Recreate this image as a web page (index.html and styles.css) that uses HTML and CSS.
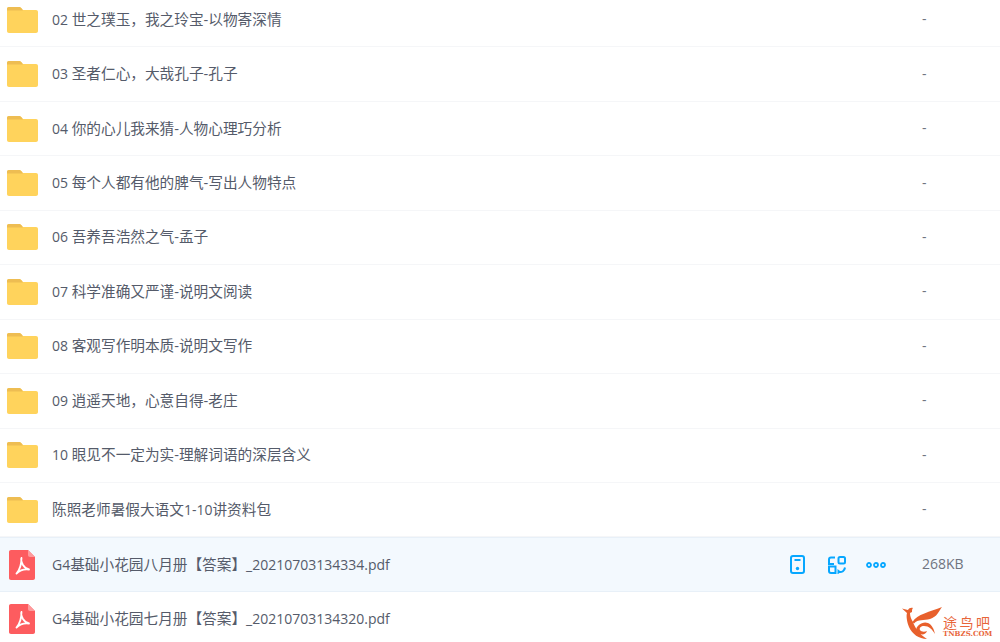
FILE: index.html
```html
<!DOCTYPE html>
<html lang="zh">
<head>
<meta charset="utf-8">
<title>文件列表</title>
<link rel="stylesheet" href="styles.css">
</head>
<body>
<svg class="defs" width="0" height="0">
  <symbol id="folder" viewBox="0 0 31 26">
    <path d="M0 2C0 .8.8 0 2 0h10c1 0 1.600.4 2.200 1.100L16 3h13c1.200 0 2 .8 2 2v19c0 1.200-.8 2-2 2H2c-1.200 0-2-.8-2-2z" fill="#ffd35c"/>
    <path d="M0 2C0 .8.8 0 2 0h10c1 0 1.600.4 2.200 1.100L16 3.400H0z" fill="#eebd52"/>
  </symbol>
  <symbol id="pdf" viewBox="0 0 26 30">
    <path d="M2 0h17l7 7v21c0 1.200-.8 2-2 2H2c-1.200 0-2-.8-2-2V2C0 .8.800 0 2 0z" fill="#fd5c5f"/>
    <path d="M19 0l7 7h-5c-1.200 0-2-.8-2-2z" fill="#fe9a9c"/>
    <path d="M12.500 8c-1 1.500.5 5 1.500 7 1.500 2.500 3.500 4 6 4.500M20 19.500c-4-.5-9 .5-12.500 4M7.500 23.500c2.500-3 5-9 5-15.500" fill="none" stroke="#fff" stroke-width="1.800" stroke-linecap="round"/>
  </symbol>
</svg>
<main class="list">
  <div class="row first"><svg class="ico-folder"><use href="#folder"/></svg><span class="name"><span class="l">02 </span>世之璞玉，我之玲宝-以物寄深情</span><span class="size">-</span></div>
  <div class="row"><svg class="ico-folder"><use href="#folder"/></svg><span class="name"><span class="l">03 </span>圣者仁心，大哉孔子-孔子</span><span class="size">-</span></div>
  <div class="row"><svg class="ico-folder"><use href="#folder"/></svg><span class="name"><span class="l">04 </span>你的心儿我来猜-人物心理巧分析</span><span class="size">-</span></div>
  <div class="row"><svg class="ico-folder"><use href="#folder"/></svg><span class="name"><span class="l">05 </span>每个人都有他的脾气-写出人物特点</span><span class="size">-</span></div>
  <div class="row"><svg class="ico-folder"><use href="#folder"/></svg><span class="name"><span class="l">06 </span>吾养吾浩然之气-孟子</span><span class="size">-</span></div>
  <div class="row"><svg class="ico-folder"><use href="#folder"/></svg><span class="name"><span class="l">07 </span>科学准确又严谨-说明文阅读</span><span class="size">-</span></div>
  <div class="row"><svg class="ico-folder"><use href="#folder"/></svg><span class="name"><span class="l">08 </span>客观写作明本质-说明文写作</span><span class="size">-</span></div>
  <div class="row"><svg class="ico-folder"><use href="#folder"/></svg><span class="name"><span class="l">09 </span>逍遥天地，心意自得-老庄</span><span class="size">-</span></div>
  <div class="row"><svg class="ico-folder"><use href="#folder"/></svg><span class="name"><span class="l">10 </span>眼见不一定为实-理解词语的深层含义</span><span class="size">-</span></div>
  <div class="row"><svg class="ico-folder"><use href="#folder"/></svg><span class="name">陈照老师暑假大语文<span class="l">1-10</span>讲资料包</span><span class="size">-</span></div>
  <div class="row active"><svg class="ico-pdf"><use href="#pdf"/></svg><span class="name"><span class="l">G4</span>基础小花园八月册【答案】<span class="l">_20210703134334.pdf</span></span>
    <div class="actions">
      <svg class="act phone" viewBox="0 0 15 19"><rect x="1" y="1" width="13" height="17" rx="2" fill="none" stroke="#06a7ff" stroke-width="2"/><rect x="4.500" y="4" width="6" height="2" fill="#06a7ff"/><circle cx="7.500" cy="13.500" r="1.700" fill="#06a7ff"/></svg>
      <svg class="act swap" viewBox="0 0 18 18"><g fill="none" stroke="#06a7ff" stroke-width="2"><rect x="10.500" y="1" width="6.500" height="6.500" rx="1.500"/><path d="M7 1.500H3C1.800 1.500 1 2.300 1 3.500V8h5"/><path d="M1 10.500h6.500V17H3c-1.200 0-2-.8-2-2z"/><path d="M11 16c3 .5 5.500-1 6-4.500"/></g><path d="M9.500 13v5.500l3.500-2.700z" fill="#06a7ff"/></svg>
      <svg class="act dots" viewBox="0 0 20 6"><g fill="none" stroke="#06a7ff" stroke-width="1.800"><circle cx="3" cy="3" r="2"/><circle cx="10" cy="3" r="2"/><circle cx="17" cy="3" r="2"/></g></svg>
    </div>
    <span class="size">268KB</span></div>
  <div class="row"><svg class="ico-pdf"><use href="#pdf"/></svg><span class="name"><span class="l">G4</span>基础小花园七月册【答案】<span class="l">_20210703134320.pdf</span></span></div>
</main>
<div class="mark">
  <svg class="mark-logo" viewBox="0 0 40 32">
    <path d="M0 1.500L6 3C7 1 9 .5 11 1c-1 1-1 2-1 4l-2 1c0 3 1 6 3 9 1.500 5 6 12 14 17-8 0-15-5-18-12C5 15 4 9 5 6z" fill="#e8602c"/>
    <path d="M10.500 15C15 7 28 5 40 0c-3 4-5 10-12 12-6 1.500-12 0-16 4.500z" fill="#e8602c"/>
    <path d="M14 24c0-6 7-10 12-8 4 2 6 6 7 11-3-5-6-8-11-8-3 0-5 2-4 4 1 2 5 2 7 1-1 3-4 4-7 3-2-.5-4-1-4-3z" fill="#e8602c"/>
  </svg>
  <div class="mark-text"><span class="mark-cn">途鸟吧</span><span class="mark-en">TNBZS.COM</span></div>
</div>
</body>
</html>
```
FILE: styles.css
```css
html, body { margin: 0; padding: 0; }
body {
  width: 1000px;
  height: 642px;
  overflow: hidden;
  background: #fff;
  position: relative;
  font-family: "Open Sans", "Noto Sans CJK SC", sans-serif;
  font-size: 14.67px;
  color: #555b6a;
}
.defs { position: absolute; }
.list { display: flex; flex-direction: column; }
.row {
  height: 54.45px;
  box-sizing: border-box;
  flex: none;
  display: flex;
  align-items: center;
  padding-left: 7px;
  border-bottom: 1px solid #f5f6f8;
}
.first { margin-top: -7px; }
.active { background: #f3f9fe; border-bottom-color: #e8f0f8; border-top: 1px solid #e8f0f8; }
.ico-folder { width: 31px; height: 26px; flex: none; }
.ico-pdf { width: 26px; height: 30px; margin: 0 3px 0 2px; flex: none; }
.name { margin: -3px 0 0 14px; flex: 1; white-space: nowrap; }
.ico-pdf + .name { margin-left: 14px; }
.l { font-size: 14px; }
.size { width: 78px; flex: none; margin-top: -2px; font-size: 14px; color: #6f7480; }
.actions { display: flex; align-items: center; margin-right: 36px; }
.act { display: block; }
.act.phone { width: 15px; height: 19px; margin-right: 23px; }
.act.swap { width: 18px; height: 18px; margin-right: 20px; }
.act.dots { width: 20px; height: 6px; }
.mark {
  position: absolute;
  left: 902px;
  top: 607px;
  display: flex;
  gap: 1px;
  color: #e8653a;
}
.mark-logo { width: 40px; height: 32px; }
.mark-text { display: flex; flex-direction: column; margin-top: 8px; }
.mark-cn { font-family: "Noto Sans CJK SC", sans-serif; font-size: 14px; line-height: 15px; letter-spacing: 2.500px; }
.mark-en { font-family: "DejaVu Serif", serif; font-size: 7px; line-height: 8px; font-weight: 700; }
```
